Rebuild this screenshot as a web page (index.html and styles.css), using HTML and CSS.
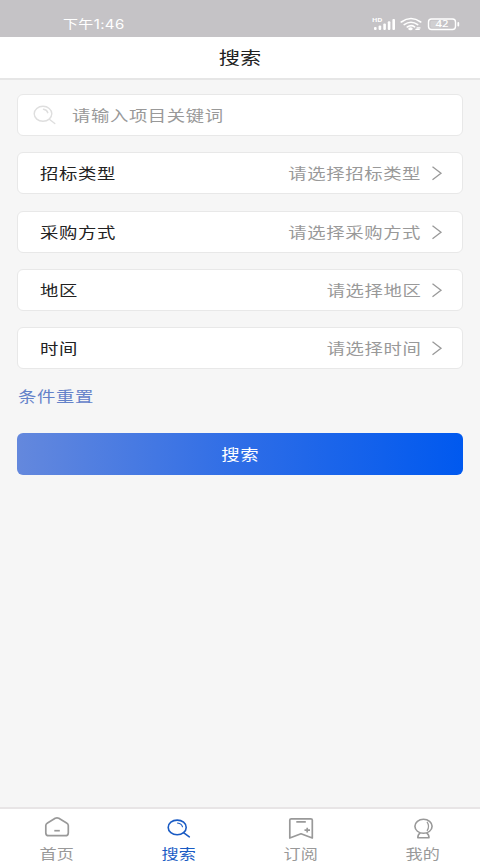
FILE: index.html
```html
<!DOCTYPE html>
<html lang="zh-CN">
<head>
<meta charset="utf-8">
<title>搜索</title>
<link rel="stylesheet" href="styles.css">
</head>
<body>
<div class="app">
  <div class="status">
    <span class="clock">下午1:46</span>
    <svg class="indicators" width="90" height="16" viewBox="0 0 90 16">
      <g fill="#fff">
        <text class="hd" x="1" y="6.400" textLength="10.500" lengthAdjust="spacingAndGlyphs">HD</text>
        <rect x="3" y="11" width="2.600" height="3" rx="1"/>
        <rect x="7.600" y="9.500" width="2.600" height="4.500" rx="1"/>
        <rect x="12.300" y="7.500" width="2.600" height="6.500" rx="1"/>
        <rect x="16.800" y="5.300" width="2.600" height="8.700" rx="1"/>
        <rect x="21.400" y="3" width="2.600" height="11" rx="1"/>
        <ellipse cx="39.500" cy="12.700" rx="2.200" ry="1.500"/>
      </g>
      <g fill="none" stroke="#fff" stroke-width="1.600" stroke-linecap="round">
        <path d="M30.300 6Q40-1 49.700 6M33.200 8.600Q40 3.800 46.700 8.600M36.300 11Q40 8.400 43.600 10.800"/>
        <path stroke-width="1.200" d="M44.800 13.300h3.500M46 11.900h3"/>
        <rect x="57.500" y="3" width="27" height="10.500" rx="3" stroke-width="1.400"/>
        <path stroke-width="1.800" d="M87.300 7v2.500"/>
      </g>
      <rect x="59.500" y="4.800" width="11" height="7" rx="1.500" fill="#fff" opacity=".2"/>
      <text class="level" x="64.500" y="11.200" textLength="13" lengthAdjust="spacingAndGlyphs" fill="#fff">42</text>
    </svg>
  </div>

  <header class="header"><h1 class="title">搜索</h1></header>

  <main class="form">
    <div class="field">
      <svg class="lens" width="24" height="20" viewBox="0 0 24 20" fill="none" stroke="#dedede" stroke-width="1.400" stroke-linecap="round">
        <ellipse cx="10" cy="8.800" rx="8.800" ry="7.500"/><path d="M10.500 4.300q3.500.5 4.300 3.400M16.300 14.300l5.500 4.200"/>
      </svg>
      <span class="text muted">请输入项目关键词</span>
    </div>
    <div class="field select">
      <span class="text">招标类型</span><span class="text muted value">请选择招标类型</span>
      <svg class="arrow" width="12" height="16" viewBox="0 0 12 16"><path d="M1.500 1.800l8.500 6.500-8.500 6.500"/></svg>
    </div>
    <div class="field select">
      <span class="text">采购方式</span><span class="text muted value">请选择采购方式</span>
      <svg class="arrow" width="12" height="16" viewBox="0 0 12 16"><path d="M1.500 1.800l8.500 6.500-8.500 6.500"/></svg>
    </div>
    <div class="field select">
      <span class="text">地区</span><span class="text muted value">请选择地区</span>
      <svg class="arrow" width="12" height="16" viewBox="0 0 12 16"><path d="M1.500 1.800l8.500 6.500-8.500 6.500"/></svg>
    </div>
    <div class="field select">
      <span class="text">时间</span><span class="text muted value">请选择时间</span>
      <svg class="arrow" width="12" height="16" viewBox="0 0 12 16"><path d="M1.500 1.800l8.500 6.500-8.500 6.500"/></svg>
    </div>
    <a class="text reset">条件重置</a>
    <div class="submit"><span class="text submit-label">搜索</span></div>
  </main>

  <nav class="tabs">
    <div class="tab">
      <svg width="28" height="24" viewBox="0 0 28 24" fill="none" stroke="#999" stroke-width="1.700" stroke-linejoin="round">
        <path d="M4.500 7.900q-1.700 1-1.700 2.700v7.300q0 2.800 3 2.800h16.500q3 0 3-2.800v-7.300q0-1.700-1.700-2.700L15.800 3.300q-1.800-.9-3.600 0z"/><path d="M11.300 15.700h5.500"/>
      </svg>
      <span class="tab-label">首页</span>
    </div>
    <div class="tab active">
      <svg width="28" height="24" viewBox="0 0 28 24" fill="none" stroke="#195bc4" stroke-width="1.600" stroke-linecap="round">
        <ellipse cx="12.200" cy="12.400" rx="9" ry="7.300"/><path d="M18.500 17.700l5.800 4.200"/><path stroke-width="1.100" d="M12.500 8q4 .5 5 3.800"/>
      </svg>
      <span class="tab-label">搜索</span>
    </div>
    <div class="tab">
      <svg width="28" height="24" viewBox="0 0 28 24" fill="none" stroke="#999" stroke-width="1.700" stroke-linejoin="round">
        <path d="M2.800 5q0-1.200 1.500-1.200h19.500q1.500 0 1.500 1.200v18L14 18.800 2.800 23z"/><path d="M9.300 6.900h9.500M17.500 15.200h5.500M20.200 12.800v4.800"/>
      </svg>
      <span class="tab-label">订阅</span>
    </div>
    <div class="tab">
      <svg width="28" height="24" viewBox="0 0 28 24" fill="none" stroke="#999" stroke-width="1.600" stroke-linejoin="round">
        <ellipse cx="14.500" cy="11.300" rx="8.600" ry="7"/><path stroke-width="1.200" d="M18 6.800q3.200 4.500 0 9"/><path d="M11.300 17.900q-2.500 1.500-2.500 4.800h11.200q0-3.300-2.500-4.800"/>
      </svg>
      <span class="tab-label">我的</span>
    </div>
  </nav>
</div>
</body>
</html>
```
FILE: styles.css
```css
* { box-sizing: border-box; }
body {
  margin: 0;
  font-family: "Noto Sans", "Noto Sans CJK SC", sans-serif;
  color: #222;
}
svg { display: block; flex: none; }
.app {
  display: flex;
  flex-direction: column;
  height: 865px;
  overflow: hidden;
  background: #f6f6f6;
}
.status {
  display: flex;
  flex: none;
  justify-content: space-between;
  height: 37px;
  padding: 16px 19px 0 63px;
  background: #c5c3c6;
  color: #fff;
}
.clock {
  font-family: Inter, "Noto Sans CJK SC", sans-serif;
  font-size: 12.500px;
  line-height: 17px;
  letter-spacing: .3px;
  transform: scaleX(1.200);
  transform-origin: left;
}
.hd { font-size: 6px; font-weight: 700; }
.level { font-size: 8.500px; font-weight: 500; }
.header {
  flex: none;
  height: 43px;
  border-bottom: 2px solid #e6e6e6;
  background: #fff;
  text-align: center;
}
.title {
  margin: 0;
  font-size: 17px;
  font-weight: 400;
  line-height: 42px;
  transform: scaleX(1.250);
}
.form {
  display: flex;
  flex: 1;
  flex-direction: column;
  gap: 16.300px;
  padding: 14px 17px 0;
}
.field {
  display: flex;
  flex: none;
  align-items: center;
  height: 42px;
  padding: 0 19px 0 15px;
  border: 1px solid #e8e8e8;
  border-radius: 6px;
  background: #fff;
}
.select { padding-left: 22px; }
.lens { margin-right: 15px; }
.text {
  font-size: 14.800px;
  line-height: 24px;
  letter-spacing: .5px;
  white-space: nowrap;
  transform: scaleX(1.240);
  transform-origin: left;
}
.muted { color: #999; }
.value {
  margin-left: auto;
  margin-right: 10px;
  transform-origin: right;
}
.arrow {
  fill: none;
  stroke: #999;
  stroke-width: 1.300;
}
.reset {
  align-self: flex-start;
  margin: -1px 0 8px 1px;
  color: #6482c9;
}
.submit {
  height: 42px;
  border-radius: 6px;
  background: linear-gradient(90deg, #6488dd, #2c6ce7 52%, #0059ef);
  color: #fff;
  text-align: center;
}
.submit-label {
  display: inline-block;
  line-height: 42px;
  transform-origin: center;
}
.tabs {
  display: flex;
  flex: none;
  justify-content: space-between;
  height: 58px;
  padding: 6px 40px 0;
  border-top: 2px solid #e8e5e6;
  background: #fff;
  color: #999;
}
.tab {
  display: flex;
  flex-direction: column;
  align-items: center;
  width: 34px;
}
.active { color: #195bc4; }
.tab-label {
  margin-top: 4px;
  font-size: 13.700px;
  line-height: 22px;
  white-space: nowrap;
  transform: scaleX(1.250);
}
```
